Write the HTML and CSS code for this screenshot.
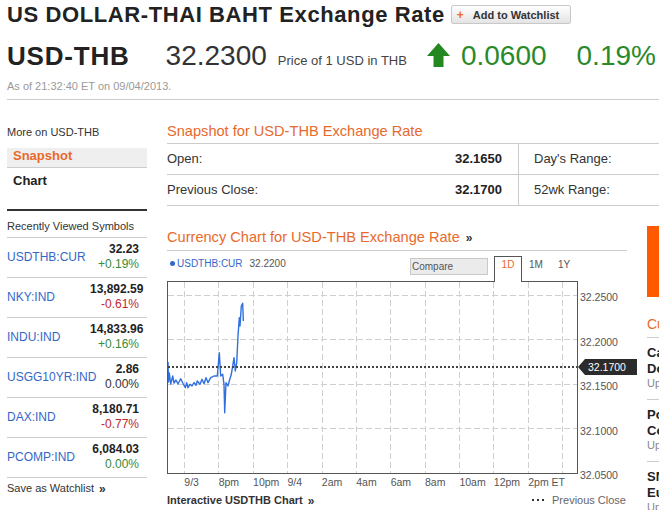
FILE: index.html
```html
<!DOCTYPE html>
<html lang="en">
<head>
<meta charset="utf-8">
<title>USD-THB Exchange Rate</title>
<link rel="stylesheet" href="styles.css">
</head>
<body>
<div class="page">
  <header class="quote-header">
    <div class="title-row">
      <h1 class="title">US DOLLAR-THAI BAHT Exchange Rate</h1>
      <button class="watch-btn" type="button"><span class="plus">+</span>Add to Watchlist</button>
    </div>
    <div class="price-row">
      <span class="ticker">USD-THB</span>
      <span class="price">32.2300</span>
      <span class="price-note">Price of 1 USD in THB</span>
      <svg class="up-arrow" viewBox="0 0 23 24" width="23" height="24"><polygon points="11.5,0 23,13 16.5,13 16.5,24 6.5,24 6.5,13 0,13" fill="#22881f"/></svg>
      <span class="change">0.0600</span>
      <span class="change-pct">0.19%</span>
    </div>
    <div class="asof">As of 21:32:40 ET on 09/04/2013.</div>
  </header>

  <div class="main">
    <aside class="sidebar">
      <div class="side-label">More on USD-THB</div>
      <nav class="side-nav">
        <a class="side-link is-active">Snapshot</a>
        <a class="side-link">Chart</a>
      </nav>
      <div class="recent">
        <div class="recent-head">Recently Viewed Symbols</div>
        <div class="sym-row">
          <a class="sym-name">USDTHB:CUR</a>
          <div class="sym-vals"><div class="sym-price">32.23</div><div class="up">+0.19%</div></div>
        </div>
        <div class="sym-row">
          <a class="sym-name">NKY:IND</a>
          <div class="sym-vals"><div class="sym-price">13,892.59</div><div class="down">-0.61%</div></div>
        </div>
        <div class="sym-row">
          <a class="sym-name">INDU:IND</a>
          <div class="sym-vals"><div class="sym-price">14,833.96</div><div class="up">+0.16%</div></div>
        </div>
        <div class="sym-row">
          <a class="sym-name">USGG10YR:IND</a>
          <div class="sym-vals"><div class="sym-price">2.86</div><div class="flat">0.00%</div></div>
        </div>
        <div class="sym-row">
          <a class="sym-name">DAX:IND</a>
          <div class="sym-vals"><div class="sym-price">8,180.71</div><div class="down">-0.77%</div></div>
        </div>
        <div class="sym-row">
          <a class="sym-name">PCOMP:IND</a>
          <div class="sym-vals"><div class="sym-price">6,084.03</div><div class="up">0.00%</div></div>
        </div>
      </div>
      <a class="save-link">Save as Watchlist <span class="raquo-sm">»</span></a>
    </aside>

    <section class="content">
      <h2 class="section-title snap-title">Snapshot for USD-THB Exchange Rate</h2>
      <div class="snap-table">
        <div class="snap-row">
          <div class="snap-main"><span>Open:</span><span class="snap-val">32.1650</span></div>
          <div class="snap-side">Day's Range:</div>
        </div>
        <div class="snap-row">
          <div class="snap-main"><span>Previous Close:</span><span class="snap-val">32.1700</span></div>
          <div class="snap-side">52wk Range:</div>
        </div>
      </div>

      <div class="lower">
        <div class="chart-col">
          <h2 class="section-title chart-title">Currency Chart for USD-THB Exchange Rate <span class="raquo">»</span></h2>
          <div class="chart-toolbar">
            <div class="legend"><span class="dot"></span><span class="legend-sym">USDTHB:CUR</span><span class="legend-val">32.2200</span></div>
            <div class="compare">Compare</div>
            <div class="tabs">
              <span class="tab is-active">1D</span>
              <span class="tab">1M</span>
              <span class="tab">1Y</span>
            </div>
          </div>
          <div class="chart-body">
            <div class="plot">
              <svg width="409" height="191" viewBox="0 0 409 191">
                <g stroke="#cfcfcf" stroke-width="1" stroke-dasharray="6 3">
                  <line x1="16.5" y1="0" x2="16.5" y2="191"/>
                  <line x1="50.5" y1="0" x2="50.5" y2="191"/>
                  <line x1="85.5" y1="0" x2="85.5" y2="191"/>
                  <line x1="119.5" y1="0" x2="119.5" y2="191"/>
                  <line x1="154.5" y1="0" x2="154.5" y2="191"/>
                  <line x1="188.5" y1="0" x2="188.5" y2="191"/>
                  <line x1="222.5" y1="0" x2="222.5" y2="191"/>
                  <line x1="257.5" y1="0" x2="257.5" y2="191"/>
                  <line x1="291.5" y1="0" x2="291.5" y2="191"/>
                  <line x1="325.5" y1="0" x2="325.5" y2="191"/>
                  <line x1="360.5" y1="0" x2="360.5" y2="191"/>
                  <line x1="394.5" y1="0" x2="394.5" y2="191"/>
                  <line x1="0" y1="13.5" x2="409" y2="13.5"/>
                  <line x1="0" y1="57.5" x2="409" y2="57.5"/>
                  <line x1="0" y1="102.5" x2="409" y2="102.5"/>
                  <line x1="0" y1="146.5" x2="409" y2="146.5"/>
                </g>
                <polyline fill="none" stroke="#2f6fdf" stroke-width="1.4" stroke-linejoin="round" points="0,80 0.5,100 1.3,91 2.7,102 4.7,94 6,101 8,98 10,102 12.7,96.7 15.3,102 17.3,105.7 18.7,100.7 20,105.7 22,102.3 24,104 26,100.7 28,103.3 29.3,99 32,102.3 34,97.3 36,101.7 38,95.7 40,100.7 42.7,95.7 46,94 49.3,94 51.3,70.7 52.7,94 54.7,92.3 56,102.3 56.7,130.7 58,100.7 60,104 61.3,99 63.3,92.3 64.7,84 66,75.7 67.3,89 68.7,80.7 70,54 71.3,35.7 72,44 73.3,24 74.7,21.3 75.3,39"/>
                <line x1="0" y1="85" x2="409" y2="85" stroke="#444" stroke-width="2" stroke-dasharray="2 2"/>
              </svg>
            </div>
            <div class="yaxis">
              <span>32.2500</span>
              <span>32.2000</span>
              <span>32.1500</span>
              <span>32.1000</span>
              <span>32.0500</span>
            </div>
            <div class="prev-marker">32.1700</div>
          </div>
          <div class="xaxis">
            <span>9/3</span><span>8pm</span><span>10pm</span><span>9/4</span><span>2am</span><span>4am</span><span>6am</span><span>8am</span><span>10am</span><span>12pm</span><span>2pm ET</span>
          </div>
          <div class="chart-foot">
            <a class="foot-link">Interactive USDTHB Chart <span class="raquo-sm">»</span></a>
            <span class="prev-legend"><span class="prev-dots"></span>Previous Close</span>
          </div>
        </div>

        <aside class="rail">
          <div class="promo"></div>
          <h3 class="rail-title">Currency News</h3>
          <div class="news-item">
            <div class="news-head">Canadian Dollar Falls<br>Despite Oil Gains</div>
            <div class="news-time">Updated 2 hours ago</div>
          </div>
          <div class="news-item">
            <div class="news-head">Pound Climbs Against<br>Commodity Currencies</div>
            <div class="news-time">Updated 3 hours ago</div>
          </div>
          <div class="news-item">
            <div class="news-head">SNB Holds Rates as<br>Euro Weakens</div>
            <div class="news-time">Updated 5 hours ago</div>
          </div>
        </aside>
      </div>
    </section>
  </div>
</div>
</body>
</html>
```

FILE: styles.css
```css
* { box-sizing: border-box; }
html, body { margin: 0; padding: 0; }
body {
  width: 659px;
  height: 510px;
  overflow: hidden;
  font-family: "Liberation Sans", Arial, sans-serif;
  color: #333;
  background: #fff;
}
a { text-decoration: none; cursor: pointer; }
.page { padding-left: 7px; width: 1000px; }

/* header */
.quote-header { width: 652px; border-bottom: 1px solid #ccc; padding-bottom: 6px; }
.title-row { display: flex; align-items: flex-start; padding-top: 1px; height: 29px; }
.title {
  margin: 0;
  font-size: 22px;
  letter-spacing: 0.6px;
  line-height: 28px;
  font-weight: bold;
  color: #222;
  white-space: nowrap;
}
.watch-btn {
  margin: 4px 0 0 6px;
  height: 19px;
  width: 120px;
  padding: 0 0 0 5px;
  display: flex;
  align-items: center;
  border: 1px solid #c8c8c8;
  border-radius: 2px;
  background: linear-gradient(#fefefe, #e4e4e4);
  font: bold 11px "Liberation Sans", Arial, sans-serif;
  color: #333;
  white-space: nowrap;
}
.plus { color: #e8692c; margin-right: 9px; font-size: 12px; }

.price-row {
  display: flex;
  align-items: baseline;
  margin-top: 11px;
  height: 32px;
  line-height: 32px;
  white-space: nowrap;
}
.ticker { font-size: 26px; font-weight: bold; letter-spacing: 0.8px; color: #222; }
.price { font-size: 28px; margin-left: 36px; color: #333; }
.price-note { font-size: 13px; margin-left: 11px; color: #444; }
.up-arrow { align-self: flex-start; margin-top: 3px; margin-left: 20px; flex: none; }
.change { font-size: 28px; color: #2a8a2a; margin-left: 11px; }
.change-pct { font-size: 28px; color: #2a8a2a; margin-left: 30px; }
.asof { margin-top: 7px; font-size: 11px; line-height: 14px; color: #999; }

/* layout */
.main { display: flex; align-items: flex-start; }

/* sidebar */
.sidebar { width: 140px; flex: none; padding-top: 25px; font-size: 11px; }
.side-label { line-height: 14px; color: #333; }
.side-nav { margin-top: 9px; }
.side-link {
  display: block;
  font-size: 13px;
  font-weight: bold;
  line-height: 14px;
  color: #222;
  padding: 6px 6px 0;
}
.side-link.is-active {
  background: #efefef;
  color: #e8692c;
  padding: 1px 6px 4px;
  border-bottom: 1px solid #ccc;
}
.recent { margin-top: 21px; border-top: 2px solid #333; }
.recent-head { padding: 8px 0 4px; line-height: 14px; border-bottom: 1px solid #ccc; color: #333; }
.sym-row {
  display: grid;
  grid-template-columns: 83px 49px;
  align-items: center;
  height: 40px;
  border-bottom: 1px solid #ccc;
}
.sym-name { font-size: 12px; line-height: 15px; color: #3468c8; white-space: nowrap; }
.sym-vals {
  align-self: start;
  padding-top: 4px;
  text-align: right;
  font-size: 12px;
  line-height: 15px;
  white-space: nowrap;
}
.sym-price { font-weight: bold; color: #222; }
.up { color: #3a8a3a; }
.down { color: #c0272d; }
.flat { color: #333; }
.save-link { display: block; padding-top: 3px; line-height: 14px; font-size: 11px; color: #333; }
.raquo-sm { font-size: 12px; font-weight: bold; color: #333; margin-left: 2px; position: relative; top: 1px; }

/* content */
.content { margin-left: 20px; width: 640px; flex: none; }
.section-title {
  margin: 0;
  font-size: 14.6px;
  font-weight: normal;
  line-height: 18px;
  color: #e8692c;
  border-bottom: 1px solid #ccc;
  white-space: nowrap;
}
.snap-title { padding: 22px 0 3px; }
.snap-row {
  display: grid;
  grid-template-columns: 352px 1fr;
  border-bottom: 1px solid #ccc;
  font-size: 13px;
  line-height: 30px;
  color: #333;
}
.snap-main { display: flex; justify-content: space-between; padding-right: 16px; border-right: 1px solid #ccc; }
.snap-val { font-weight: bold; color: #222; }
.snap-side { padding-left: 15px; }

.lower { display: flex; gap: 20px; padding-top: 20px; }
.chart-col { width: 460px; flex: none; }
.chart-title { padding: 2px 0 3px; }
.raquo { color: #333; font-size: 12px; font-weight: bold; margin-left: 2px; }

.chart-toolbar { display: flex; align-items: flex-start; width: 411px; height: 30px; }
.legend { margin-left: 3px; padding-top: 6px; font-size: 10px; line-height: 14px; white-space: nowrap; }
.dot {
  display: inline-block;
  width: 5px;
  height: 5px;
  border-radius: 50%;
  background: #3468c8;
  margin-right: 2px;
  vertical-align: 1px;
}
.legend-sym { color: #3468c8; }
.legend-val { color: #555; margin-left: 7px; }
.compare {
  margin-left: auto;
  margin-top: 7px;
  width: 78px;
  height: 17px;
  border: 1px solid #c9c9c9;
  background: #ebebeb;
  font-size: 10px;
  line-height: 15px;
  color: #555;
  padding-left: 1px;
}
.tabs { display: flex; align-self: flex-end; margin: 0 0 -1px 6px; }
.tab {
  width: 28px;
  height: 26px;
  padding-top: 1px;
  border: 1px solid transparent;
  border-bottom: 0;
  text-align: center;
  font-size: 10px;
  line-height: 14px;
  color: #555;
}
.tab.is-active {
  border-color: #555;
  background: #fff;
  color: #e8692c;
  position: relative;
  z-index: 1;
}

.chart-body { display: flex; position: relative; height: 193px; }
.plot { width: 411px; height: 193px; border: 1px solid #555; flex: none; }
.plot svg { display: block; }
.yaxis { padding: 10px 0 0 2px; font-size: 10.5px; line-height: 12px; color: #555; }
.yaxis span { display: block; margin-bottom: 32.5px; }
.yaxis span:last-child { margin-bottom: 0; }
.prev-marker {
  position: absolute;
  left: 411px;
  top: 78px;
  width: 59px;
  height: 16px;
  background: #2b2b2b;
  clip-path: polygon(0 50%, 7px 0, 100% 0, 100% 100%, 7px 100%);
  color: #fff;
  font-size: 10.5px;
  line-height: 16px;
  padding-left: 10px;
}
.xaxis { display: flex; height: 18px; padding-left: 17.3px; font-size: 10.5px; line-height: 16px; color: #555; }
.xaxis span { flex: none; width: 34.4px; white-space: nowrap; }

.chart-foot {
  display: flex;
  justify-content: space-between;
  align-items: baseline;
  padding: 1px 1px 0 0;
  line-height: 14px;
}
.foot-link { font-size: 11px; font-weight: bold; color: #333; }
.prev-legend { font-size: 11px; color: #666; }
.prev-dots {
  display: inline-block;
  width: 13px;
  height: 2px;
  margin-right: 7px;
  vertical-align: 3px;
  background: repeating-linear-gradient(to right, #333 0 2px, transparent 2px 5px);
}

/* right rail */
.rail { width: 200px; flex: none; }
.promo { height: 71px; background: #ff5a00; }
.rail-title {
  margin: 18px 0 0;
  font-size: 14px;
  font-weight: normal;
  line-height: 18px;
  color: #e8692c;
  padding-bottom: 4px;
  border-bottom: 1px solid #ccc;
}
.news-item { padding: 7px 0 9px; border-bottom: 1px solid #ccc; white-space: nowrap; }
.news-head { font-size: 13px; font-weight: bold; line-height: 16px; color: #222; }
.news-time { font-size: 11px; line-height: 13px; color: #888; }
```
